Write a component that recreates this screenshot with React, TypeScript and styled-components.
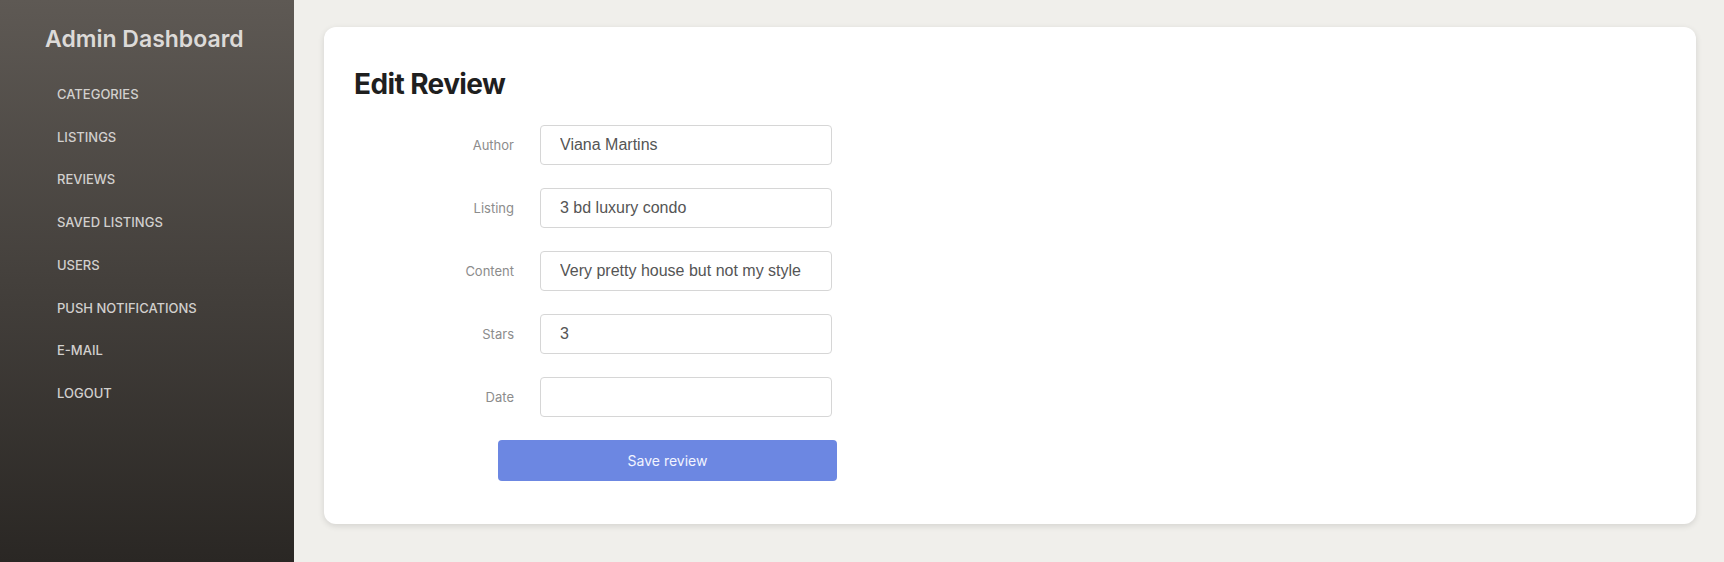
import { Fragment } from "react";
import styled, { createGlobalStyle } from "styled-components";

const GlobalStyle = createGlobalStyle`
  html, body {
    margin: 0;
    padding: 0;
    height: 100%;
    background: #f0efeb;
    font-family: Inter, "Noto Sans", sans-serif;
  }
  #root {
    height: 100%;
  }
`;

const Layout = styled.div`
  display: flex;
  min-height: 100vh;
`;

const Sidebar = styled.aside`
  width: 294px;
  flex-shrink: 0;
  padding: 25px 0 0 45px;
  box-sizing: border-box;
  background: linear-gradient(180deg, #5e5954 0%, #2a2724 100%);
`;

const Brand = styled.h1`
  margin: 0;
  font-size: 23px;
  font-weight: 600;
  color: #dcdad8;
  line-height: 28px;
`;

const NavList = styled.nav`
  display: flex;
  flex-direction: column;
  margin-top: 20px;
  padding-left: 12px;
`;

const NavItem = styled.a`
  font-size: 13px;
  font-weight: 500;
  line-height: 42.7px;
  color: #d2d0ce;
  text-transform: uppercase;
  text-decoration: none;
  cursor: pointer;
`;

const Main = styled.main`
  flex: 1;
  padding: 27px 28px 36px 30px;
`;

const Card = styled.section`
  background: #fff;
  border-radius: 12px;
  box-shadow: 0 2px 6px rgba(0, 0, 0, 0.12);
  padding: 30px 30px 43px;
`;

const Title = styled.h2`
  margin: 10px 0 24px;
  font-size: 28px;
  font-weight: 700;
  letter-spacing: -0.6px;
  line-height: 34px;
  color: #1f1f1f;
`;

const Form = styled.form`
  display: grid;
  grid-template-columns: 160px 292px;
  column-gap: 26px;
  row-gap: 23px;
  align-items: center;
`;

const Label = styled.label`
  text-align: right;
  font-size: 13px;
  color: #8c8c8c;
`;

const Input = styled.input`
  box-sizing: border-box;
  width: 292px;
  height: 40px;
  border: 1px solid #d6d6d6;
  border-radius: 4px;
  padding: 0 19px;
  font-family: "Liberation Sans", Arial, sans-serif;
  font-size: 16px;
  color: #555;
  outline: none;
`;

const SaveButton = styled.button`
  grid-column: 1 / -1;
  margin-left: 144px;
  width: 339px;
  height: 41px;
  border: none;
  border-radius: 4px;
  background: #6c87e2;
  color: #f2f4ff;
  font-family: Inter, sans-serif;
  font-size: 14px;
  cursor: pointer;
`;

const nav = [
  "Categories",
  "Listings",
  "Reviews",
  "Saved Listings",
  "Users",
  "Push Notifications",
  "E-mail",
  "Logout",
];

const fields = [
  { label: "Author", value: "Viana Martins" },
  { label: "Listing", value: "3 bd luxury condo" },
  { label: "Content", value: "Very pretty house but not my style" },
  { label: "Stars", value: "3" },
  { label: "Date", value: "" },
];

export default function App() {
  return (
    <>
      <GlobalStyle />
      <Layout>
        <Sidebar>
          <Brand>Admin Dashboard</Brand>
          <NavList>
            {nav.map((item) => (
              <NavItem key={item}>{item}</NavItem>
            ))}
          </NavList>
        </Sidebar>
        <Main>
          <Card>
            <Title>Edit Review</Title>
            <Form onSubmit={(e) => e.preventDefault()}>
              {fields.map((f) => (
                <Fragment key={f.label}>
                  <Label htmlFor={f.label}>{f.label}</Label>
                  <Input id={f.label} defaultValue={f.value} />
                </Fragment>
              ))}
              <SaveButton type="submit">Save review</SaveButton>
            </Form>
          </Card>
        </Main>
      </Layout>
    </>
  );
}
